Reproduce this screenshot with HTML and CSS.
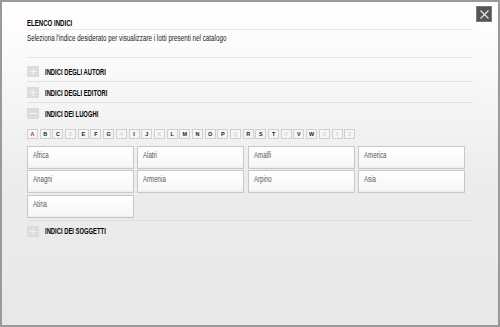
FILE: index.html
```html
<!DOCTYPE html>
<html lang="it">
<head>
    <meta charset="UTF-8">
    <title>Elenco indici</title>
    <link rel="stylesheet" href="styles.css">
</head>
<body>
    <div class="modal">
        <a href="#" class="close-btn" title="Chiudi">
            <svg width="9" height="9" viewBox="0 0 9 9"><path d="M0.5 0.5L8.5 8.5M8.5 0.5L0.5 8.5" stroke="#e8e8e8" stroke-width="1.1" fill="none"/></svg>
        </a>

        <!-- intestazione -->
        <div class="header">
            <h1 class="main-title"><span class="narrow">ELENCO INDICI</span></h1>
            <p class="subtitle"><span class="narrow">Seleziona l'indice desiderato per visualizzare i lotti presenti nel catalogo</span></p>
        </div>

        <!-- elenco degli indici -->
        <ul class="index-list">
            <li class="index-item">
                <div class="index-head"><span class="toggle">+</span><span class="index-title">INDICI DEGLI AUTORI</span></div>
            </li>
            <li class="index-item">
                <div class="index-head"><span class="toggle">+</span><span class="index-title">INDICI DEGLI EDITORI</span></div>
            </li>
            <li class="index-item open">
                <div class="index-head"><span class="toggle minus">&minus;</span><span class="index-title">INDICI DEI LUOGHI</span></div>
                <div class="letters">
                    <a href="#" class="letter active">A</a>
                    <a href="#" class="letter">B</a>
                    <a href="#" class="letter">C</a>
                    <span class="letter off">D</span>
                    <a href="#" class="letter">E</a>
                    <a href="#" class="letter">F</a>
                    <a href="#" class="letter">G</a>
                    <span class="letter off">H</span>
                    <a href="#" class="letter">I</a>
                    <a href="#" class="letter">J</a>
                    <span class="letter off">K</span>
                    <a href="#" class="letter">L</a>
                    <a href="#" class="letter">M</a>
                    <a href="#" class="letter">N</a>
                    <a href="#" class="letter">O</a>
                    <a href="#" class="letter">P</a>
                    <span class="letter off">Q</span>
                    <a href="#" class="letter">R</a>
                    <a href="#" class="letter">S</a>
                    <a href="#" class="letter">T</a>
                    <span class="letter off">U</span>
                    <a href="#" class="letter">V</a>
                    <a href="#" class="letter">W</a>
                    <span class="letter off">X</span>
                    <span class="letter off">Y</span>
                    <span class="letter off">Z</span>
                </div>
                <div class="places">
                    <a href="#" class="place"><span class="narrow">Africa</span></a>
                    <a href="#" class="place"><span class="narrow">Alatri</span></a>
                    <a href="#" class="place"><span class="narrow">Amalfi</span></a>
                    <a href="#" class="place"><span class="narrow">America</span></a>
                    <a href="#" class="place"><span class="narrow">Anagni</span></a>
                    <a href="#" class="place"><span class="narrow">Armenia</span></a>
                    <a href="#" class="place"><span class="narrow">Arpino</span></a>
                    <a href="#" class="place"><span class="narrow">Asia</span></a>
                    <a href="#" class="place"><span class="narrow">Atina</span></a>
                </div>
            </li>
            <li class="index-item last">
                <div class="index-head"><span class="toggle">+</span><span class="index-title">INDICI DEI SOGGETTI</span></div>
            </li>
        </ul>
    </div>
</body>
</html>
```

FILE: styles.css
```css
* {
    margin: 0;
    padding: 0;
    box-sizing: border-box;
}

body {
    font-family: 'Liberation Sans', Arial, sans-serif;
    background: #9a9a9a;
    padding: 2px;
    height: 327px;
    overflow: hidden;
}

/* il font originale e' un condensed: lo stringiamo */
.narrow {
    display: inline-block;
    white-space: nowrap;
    transform: scaleX(0.72);
    transform-origin: left center;
}

.modal {
    position: relative;
    height: 323px;
    background: linear-gradient(to bottom, #ffffff 0%, #fbfbfb 15%, #ececec 55%, #e8e8e8 100%);
    padding: 0 25px;
}

/* pulsante chiusura */
.close-btn {
    position: absolute;
    top: 4px;
    right: 6px;
    width: 16px;
    height: 16px;
    background: #555;
    border: 1px solid #7a7a7a;
    display: flex;
    align-items: center;
    justify-content: center;
}

.header {
    padding-top: 16px;
    border-bottom: 1px solid #e4e4e4;
    height: 56px;
}

.main-title {
    font-size: 9.5px;
    font-weight: 700;
    color: #000;
    line-height: 10px;
    padding-bottom: 1px;
    border-bottom: 1px solid #e8e8e8;
}

.main-title .narrow {
    transform: scaleX(0.64);
}

.subtitle {
    font-size: 8.5px;
    color: #1a1a1a;
    line-height: 10px;
    padding-top: 3px;
}

.subtitle .narrow {
    transform: scaleX(0.74);
}

.index-list {
    list-style: none;
    margin-top: 3px;
}

.index-item {
    border-bottom: 1px solid #e0e0e0;
}

.index-item.last {
    border-bottom: none;
}

.index-head {
    display: flex;
    align-items: center;
    height: 20px;
    padding-top: 1px;
}

.toggle {
    width: 12px;
    height: 11px;
    background: #dcdcdc;
    color: #f4f4f4;
    font-family: 'DejaVu Sans', sans-serif;
    font-size: 11px;
    line-height: 11px;
    text-align: center;
    margin-right: 6px;
    flex-shrink: 0;
}

.index-title {
    display: inline-block;
    white-space: nowrap;
    font-size: 9px;
    font-weight: 700;
    color: #000;
    transform: scaleX(0.65);
    transform-origin: left center;
}

/* lettere */
.letters {
    display: flex;
    gap: 1.7px;
    margin-top: 6px;
}

.letter {
    width: 11px;
    height: 10px;
    border: 1px solid #cfcfcf;
    background: #f6f6f6;
    font-size: 5.5px;
    font-weight: 700;
    line-height: 8px;
    text-align: center;
    color: #222;
    text-decoration: none;
}

.letter.active {
    color: #c0283a;
}

.letter.off {
    color: #d6d6d6;
}

/* luoghi */
.places {
    display: grid;
    grid-template-columns: repeat(4, 107px);
    column-gap: 3.4px;
    row-gap: 1.3px;
    margin-top: 7px;
    padding-bottom: 2px;
}

.place {
    height: 23px;
    border: 1px solid #c8c8c8;
    background: linear-gradient(to bottom, #ffffff 0%, #f6f6f6 100%);
    box-shadow: inset 0 -1px 1px rgba(0, 0, 0, 0.04);
    font-size: 8.5px;
    color: #555;
    text-decoration: none;
    padding: 3px 5px;
    line-height: 10px;
}
```
